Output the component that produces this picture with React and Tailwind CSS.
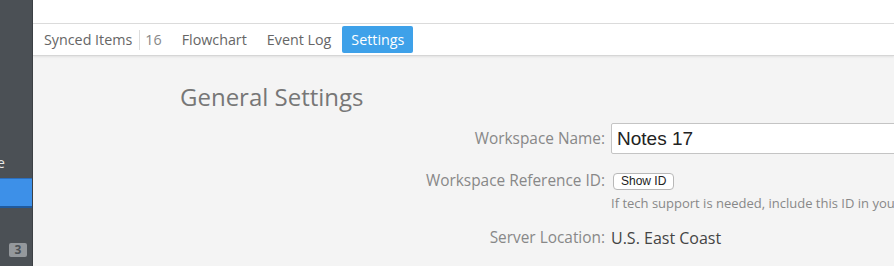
const TABS = [
  { label: 'Synced Items', count: 16 },
  { label: 'Flowchart' },
  { label: 'Event Log' },
  { label: 'Settings', active: true },
];

function Sidebar() {
  return (
    <aside className="w-[33px] shrink-0 bg-[#4b5055] border-r border-[#3c4044] flex flex-col overflow-hidden">
      <div className="h-[154px]" />
      <div className="h-[18px] text-[14px] leading-[18px] text-[#e8e8e8] whitespace-nowrap -ml-[3px]">e</div>
      <div className="h-[6px]" />
      <div className="h-[30px] bg-[#3d90e8] border-t border-[#2b6fbf] border-b-2 border-b-[#1f5a9e]" />
      <div className="h-[35px]" />
      <div className="flex justify-end pr-[5px]">
        <span className="w-[18px] h-[14px] rounded-[2px] bg-[#94989c] text-[#4b5055] text-[12px] leading-[14px] font-bold text-center">
          3
        </span>
      </div>
    </aside>
  );
}

function TabBar() {
  return (
    <div className="h-[32px] bg-white border-b border-[#d6d6d6] shadow-[0_1px_2px_rgba(0,0,0,0.08)] flex items-center pl-[11px] gap-[20px] text-[14.3px] text-[#666]">
      {TABS.map((tab) =>
        tab.active ? (
          <span
            key={tab.label}
            className="-ml-[9px] h-[27px] px-[9px] rounded-[2px] bg-[#3ea1e9] text-white leading-[27px]"
          >
            {tab.label}
          </span>
        ) : (
          <span key={tab.label} className="flex items-center">
            {tab.label}
            {tab.count && (
              <>
                <span className="ml-[7px] mr-[5px] w-px h-[20px] bg-[#ddd]" />
                <span className="text-[#888]">{tab.count}</span>
              </>
            )}
          </span>
        )
      )}
    </div>
  );
}

function Row({ label, children, className = '' }) {
  return (
    <div className={`flex items-center ${className}`}>
      <div className="w-[572px] shrink-0 text-right text-[15.4px] text-[#888] whitespace-nowrap">{label}</div>
      <div className="flex items-center pl-[6px]">{children}</div>
    </div>
  );
}

export default function App() {
  return (
    <div
      className="w-[894px] h-[266px] flex overflow-hidden bg-[#f4f4f4]"
      style={{ fontFamily: '"Open Sans", "Liberation Sans", sans-serif' }}
    >
      <Sidebar />
      <main className="flex-1 flex flex-col overflow-hidden">
        <div className="h-[24px] bg-white border-b border-[#dcdcdc]" />
        <TabBar />

        <div className="flex flex-col">
          <h1 className="pl-[147px] pt-[25px] text-[24px] leading-[32px] text-[#777] font-normal">
            General Settings
          </h1>

          <Row label="Workspace Name:" className="mt-[10px] h-[31px]">
            <input
              readOnly
              value="Notes 17"
              className="w-[320px] h-[31px] bg-white border border-[#c4c4c4] rounded-[2px] px-[5px] text-[19px] text-[#222] outline-none"
              style={{ fontFamily: '"Liberation Sans", Arial, sans-serif' }}
            />
          </Row>

          <Row label="Workspace Reference ID:" className="mt-[16px] h-[22px]">
            <button
              className="ml-[2px] h-[17px] px-[7px] bg-white border border-[#b8b8b8] rounded-[4px] text-[12px] leading-[15px] text-[#222]"
              style={{ fontFamily: '"Liberation Sans", Arial, sans-serif' }}
            >
              Show ID
            </button>
          </Row>

          <div className="pl-[578px] h-[16px] mt-[3px] text-[13px] leading-[16px] text-[#888] whitespace-nowrap">
            If tech support is needed, include this ID in your message.
          </div>

          <Row label="Server Location:" className="mt-[16px] h-[22px]">
            <span className="text-[16px] text-[#444]">U.S. East Coast</span>
          </Row>
        </div>
      </main>
    </div>
  );
}
